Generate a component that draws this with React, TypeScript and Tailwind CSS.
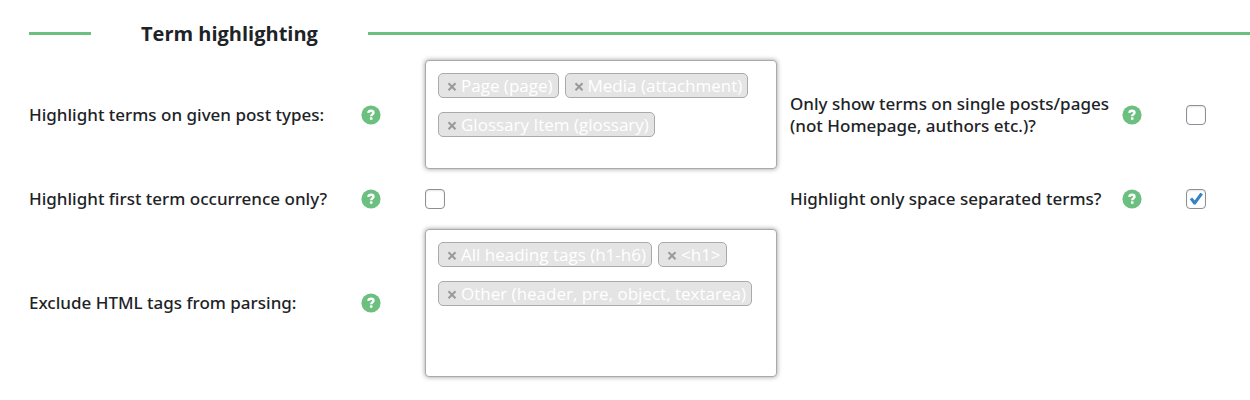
import React, { useState } from 'react';

interface HelpProps {
    topic: string;
}

interface CheckProps {
    id: string;
    checked: boolean;
    onChange: (checked: boolean) => void;
}

interface TagBoxProps {
    id: string;
    labelledBy: string;
    tags: string[];
    onRemove: (tag: string) => void;
    className: string;
}

const Help: React.FC<HelpProps> = ({ topic }) => (
    <button type="button" aria-label={`Help: ${topic}`} className="w-5 h-5 cursor-pointer">
        <svg viewBox="0 0 20 20" className="w-5 h-5">
            <circle cx="10" cy="10" r="9.6" fill="#6bbf7f" />
            <path d="M7.3 7.8C7.5 6.4 8.5 5.8 10 5.8c1.5 0 2.5.7 2.5 1.9 0 1.7-2.3 1.7-2.3 3.6" fill="none" stroke="#fff" strokeWidth="2.4" />
            <rect x="8.9" y="12.3" width="2.6" height="2.5" rx="0.6" fill="#fff" />
        </svg>
    </button>
);

const Check: React.FC<CheckProps> = ({ id, checked, onChange }) => (
    <span className="grid w-5 h-5">
        <input
            id={id}
            type="checkbox"
            checked={checked}
            onChange={e => onChange(e.target.checked)}
            className="peer col-start-1 row-start-1 appearance-none w-5 h-5 rounded border border-[#8c8f94] bg-white shadow-[inset_0_1px_2px_rgba(0,0,0,0.1)]"
        />
        <svg viewBox="0 0 20 20" className="col-start-1 row-start-1 w-5 h-5 pointer-events-none invisible peer-checked:visible">
            <path d="M14.3 3.8 17 5.3 9.6 15.6H7.7L3.8 10.3 6.2 8.4 8.7 11.4Z" fill="#3582c4" />
        </svg>
    </span>
);

const TagBox: React.FC<TagBoxProps> = ({ id, labelledBy, tags, onRemove, className }) => (
    <ul
        id={id}
        aria-labelledby={labelledBy}
        className={`flex flex-wrap content-start gap-x-[6px] gap-y-[14px] mr-[13px] p-3 rounded border border-[#aaa] bg-white font-['Open_Sans','Noto_Sans',sans-serif] font-normal shadow-[0_0_5px_rgba(0,0,0,0.4)] ${className}`}
    >
        {tags.map(tag => (
            <li key={tag} className="flex items-center h-[25px] pl-2 pr-[5px] rounded-[5px] border border-[#aaa] bg-[#e4e4e4] text-white text-[17px] leading-6 whitespace-nowrap">
                <button type="button" aria-label={`Remove ${tag}`} onClick={() => onRemove(tag)} className="w-[14px] text-left cursor-pointer">
                    <svg viewBox="0 0 10 10" className="w-[10px] h-[10px]">
                        <path d="M1.5 2.2 8.5 9.2M8.5 2.2 1.5 9.2" stroke="#999" strokeWidth="2" />
                    </svg>
                </button>
                {tag}
            </li>
        ))}
    </ul>
);

const App: React.FC = () => {
    const [postTypes, setPostTypes] = useState(['Page (page)', 'Media (attachment)', 'Glossary Item (glossary)']);
    const [htmlTags, setHtmlTags] = useState(['All heading tags (h1-h6)', '<h1>', 'Other (header, pre, object, textarea)']);
    const [singleOnly, setSingleOnly] = useState(false);
    const [firstOnly, setFirstOnly] = useState(false);
    const [spaceSeparated, setSpaceSeparated] = useState(true);

    return (
        <div className="pl-[29px] pt-[18px] pb-6 bg-white font-['Open_Sans','Noto_Sans',sans-serif] text-[#1d2327]">
            {/* Section title with a rule on both sides */}
            <div className="flex items-center mb-3">
                <div className="w-[62px] h-[3px] bg-[#6bbf7f]"></div>
                <h2 className="mx-[50px] pt-0.5 text-xl leading-7 font-bold whitespace-nowrap">Term highlighting</h2>
                <div className="grow h-[3px] bg-[#6bbf7f]"></div>
            </div>

            <form className="grid grid-cols-[332fr_64px_365fr_332fr_64px_64px] gap-y-[19px] items-center font-['Noto_Sans','Open_Sans',sans-serif] text-[17px] leading-[22px] font-medium">
                <span id="post-types-label">Highlight terms on given post types:</span>
                <Help topic="post types" />
                <TagBox
                    id="post-types"
                    labelledBy="post-types-label"
                    tags={postTypes}
                    onRemove={tag => setPostTypes(postTypes.filter(t => t !== tag))}
                    className="min-h-[109px]"
                />
                <label htmlFor="single-only">
                    Only show terms on single posts/pages<br />(not Homepage, authors etc.)?
                </label>
                <Help topic="single posts and pages" />
                <Check id="single-only" checked={singleOnly} onChange={setSingleOnly} />

                <label htmlFor="first-only">Highlight first term occurrence only?</label>
                <Help topic="first occurrence" />
                <Check id="first-only" checked={firstOnly} onChange={setFirstOnly} />
                <label htmlFor="space-separated">Highlight only space separated terms?</label>
                <Help topic="space separated terms" />
                <Check id="space-separated" checked={spaceSeparated} onChange={setSpaceSeparated} />

                <span id="html-tags-label">Exclude HTML tags from parsing:</span>
                <Help topic="excluded HTML tags" />
                <TagBox
                    id="html-tags"
                    labelledBy="html-tags-label"
                    tags={htmlTags}
                    onRemove={tag => setHtmlTags(htmlTags.filter(t => t !== tag))}
                    className="min-h-[148px]"
                />
            </form>
        </div>
    );
};

export default App;
